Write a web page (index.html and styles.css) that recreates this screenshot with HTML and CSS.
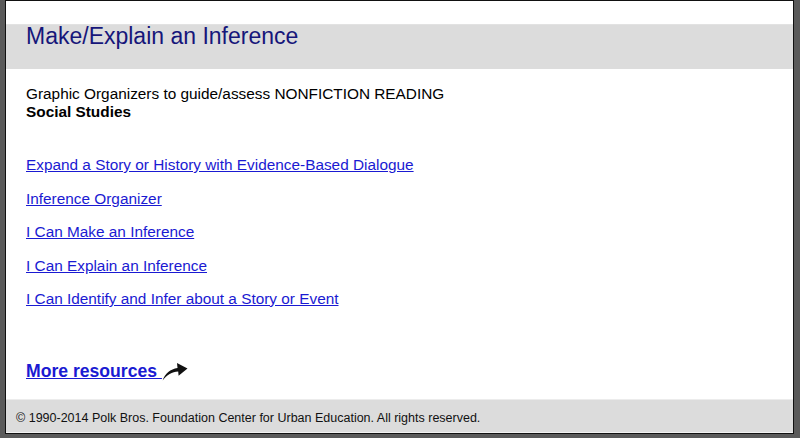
FILE: index.html
```html
<!DOCTYPE html>
<html lang="en">
<head>
<meta charset="utf-8">
<title>Make/Explain an Inference</title>
<link rel="stylesheet" href="styles.css">
</head>
<body>
<div class="frame">
  <div class="window">
    <div class="header">
      <h1 class="title">Make/Explain an Inference</h1>
    </div>
    <div class="main">
      <div class="intro">
        <div>Graphic Organizers to guide/assess NONFICTION READING</div>
        <div class="subject">Social Studies</div>
      </div>
      <div class="links">
        <a href="#">Expand a Story or History with Evidence-Based Dialogue</a>
        <a href="#">Inference Organizer</a>
        <a href="#">I Can Make an Inference</a>
        <a href="#">I Can Explain an Inference</a>
        <a href="#">I Can Identify and Infer about a Story or Event</a>
      </div>
      <div class="more">
        <a href="#" class="more-link">More resources </a><svg class="arrow" width="26" height="20" viewBox="0 0 26 20" aria-hidden="true"><path d="M0.6 19.6 C3 12.5 8.5 8 15.5 7 L15 2 L25.5 7.6 L16.6 14.8 L16.2 10.6 C10 11 4.8 14 0.6 19.6 Z" fill="#111"/></svg>
      </div>
    </div>
    <div class="footer">© 1990-2014 Polk Bros. Foundation Center for Urban Education. All rights reserved.</div>
  </div>
</div>
</body>
</html>
```

FILE: styles.css
```css
html, body {
  margin: 0;
  padding: 0;
  height: 100%;
}

body {
  background: #5a5a5a;
  font-family: "Liberation Sans", Arial, sans-serif;
  color: #000;
}

.frame {
  height: 438px;
  box-sizing: border-box;
  padding: 0 6px 4px 5px;
}

.window {
  height: 100%;
  box-sizing: border-box;
  border: 1px solid #111;
  background: #fff;
  display: flex;
  flex-direction: column;
}

.header {
  margin-top: 23px;
  height: 45px;
  background: #dcdcdc;
  border-top: 1px solid #e2e2e2;
  box-sizing: border-box;
  padding: 0 20px;
}

.title {
  margin: 0;
  margin-top: -1px;
  font-size: 23px;
  line-height: 24px;
  font-weight: normal;
  color: #16167a;
}

.main {
  padding: 16px 20px 0 20px;
  font-size: 15.36px;
  line-height: 17.5px;
}

.subject {
  font-weight: bold;
}

.links {
  margin-top: 36px;
  display: flex;
  flex-direction: column;
  align-items: flex-start;
  gap: 16px;
}

.links a {
  color: #1a1ad2;
  text-decoration: underline;
}

.more {
  margin-top: 53.5px;
  height: 20px;
  display: flex;
  align-items: flex-start;
}

.more-link {
  font-size: 17.6px;
  line-height: 20px;
  font-weight: bold;
  color: #1a1ad2;
  text-decoration: underline;
  white-space: pre;
}

.arrow {
  display: block;
  margin-top: 0;
}

.footer {
  margin-top: auto;
  background: #dcdcdc;
  border-top: 1px solid #ececec;
  border-bottom: 1px solid #f2f2f2;
  padding: 10.5px 10px 6.5px 10px;
  font-size: 12.5px;
  line-height: 15px;
  color: #111;
}
```
